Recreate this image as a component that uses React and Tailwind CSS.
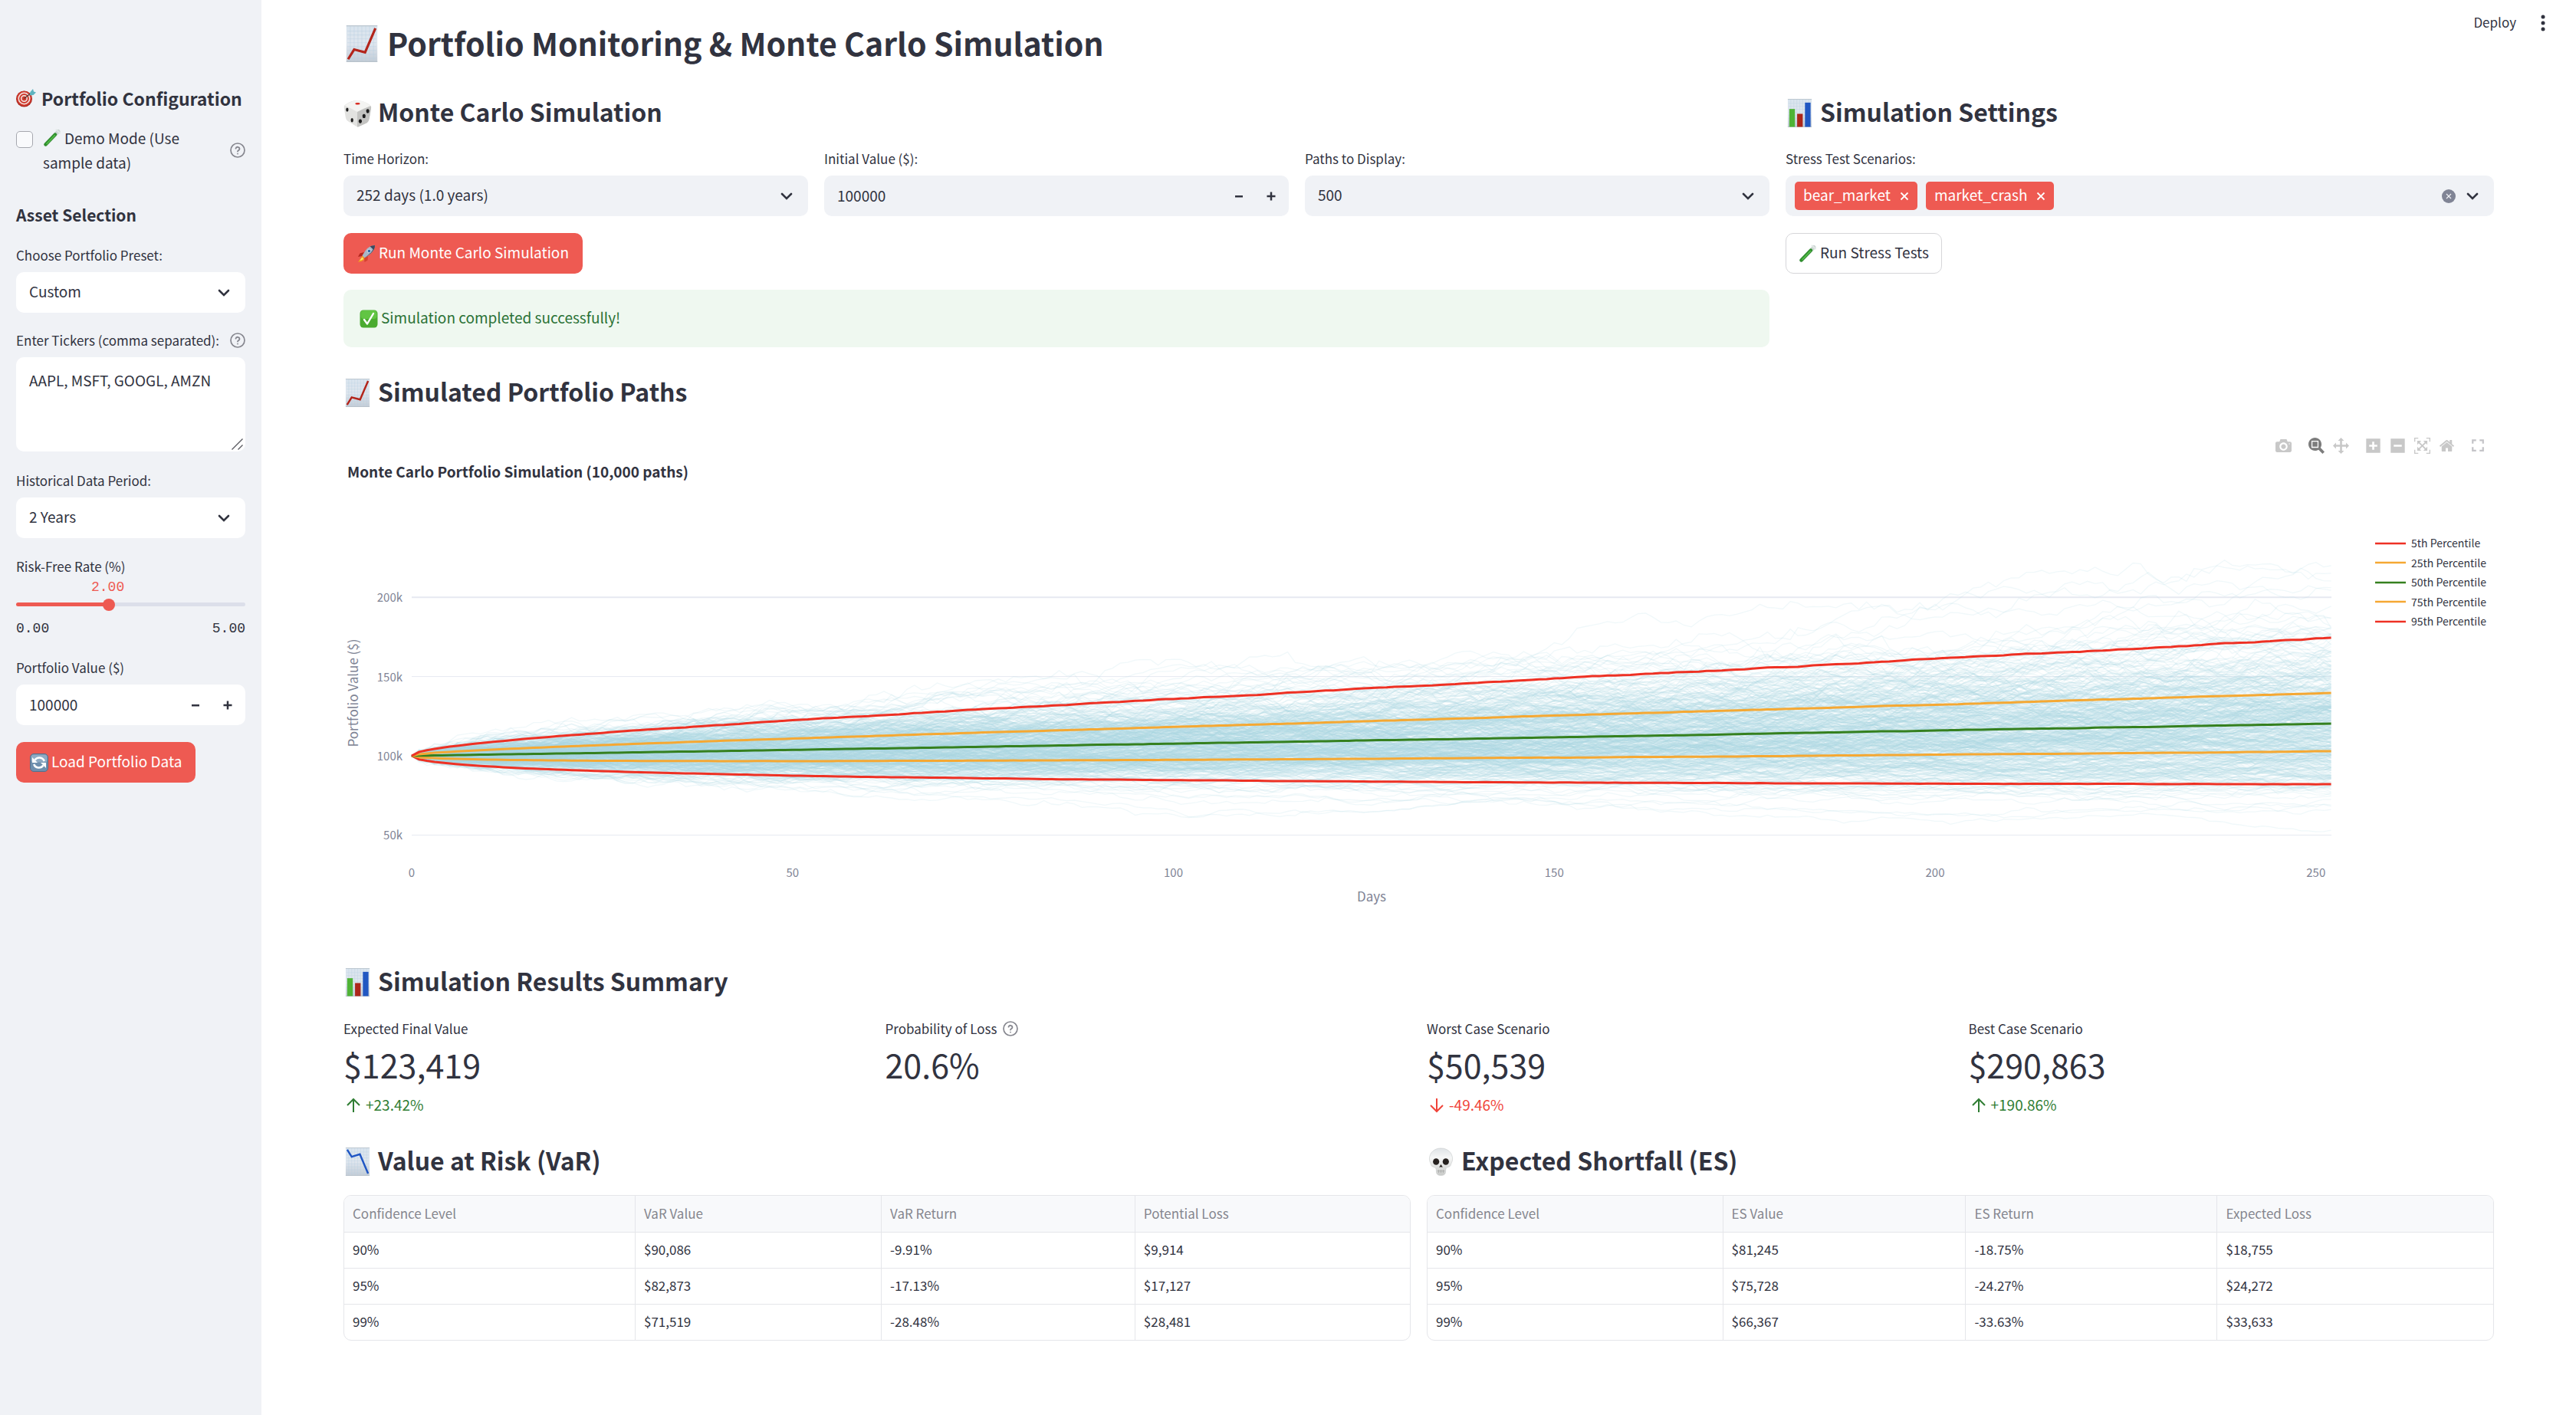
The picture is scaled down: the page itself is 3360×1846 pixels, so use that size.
import React, { useMemo, useState } from "react";

/* ---------- emoji-style pictograms ---------- */

const PaperDefs = ({ id }) => (
  <defs>
    <linearGradient id={id} x1="0" y1="0" x2="0" y2="1">
      <stop offset="0" stopColor="#d9e4ee" />
      <stop offset="0.5" stopColor="#dfe6ee" />
      <stop offset="1" stopColor="#c3ccd6" />
    </linearGradient>
  </defs>
);

const Paper = ({ id }) => (
  <>
    <PaperDefs id={id} />
    <rect x="3" y="0" width="32" height="38" fill={`url(#${id})`} />
    <path
      d="M7 1v36M11 1v36M15 1v36M19 1v36M23 1v36M27 1v36M31 1v36M4 6h30M4 10h30M4 14h30M4 18h30M4 22h30M4 26h30M4 30h30M4 34h30"
      stroke="#b9cfe2"
      strokeWidth="0.500"
      opacity="0.700"
    />
    <path d="M3 0.500h32M3 37.500h32" stroke="#b4bec8" strokeWidth="0.800" />
  </>
);

const ChartUp = ({ className }) => (
  <svg viewBox="0 0 38 38" className={className} role="img" aria-label="Chart increasing" fill="none">
    <Paper id="paper-up" />
    <path d="M4.800 35L11 25l11.300 3L33 3" stroke="#b3241a" strokeWidth="2.500" />
  </svg>
);

const ChartDown = ({ className }) => (
  <svg viewBox="0 0 38 38" className={className} role="img" aria-label="Chart decreasing" fill="none">
    <Paper id="paper-down" />
    <path d="M5 3L11 12.500l11-3.500L33 35" stroke="#1f56c4" strokeWidth="2.500" />
  </svg>
);

const BarChart = ({ className }) => (
  <svg viewBox="0 0 38 38" className={className} role="img" aria-label="Bar chart">
    <Paper id="paper-bars" />
    <rect x="5" y="13.500" width="7.500" height="24" fill="#4fb336" />
    <rect x="15.500" y="20" width="7.500" height="17.500" fill="#ad261a" />
    <rect x="26" y="5" width="7.500" height="32.500" fill="#2157c2" />
  </svg>
);

const Dice = ({ className }) => (
  <svg viewBox="0 0 38 38" className={className} role="img" aria-label="Game die">
    <path d="M20 2Q30 3.500 35 8Q37.500 10 37 13L34.500 27Q34 30 31.500 32L21 37Q18.500 38 16.500 36.500L5.500 29.500Q3.500 28 3 25.500L0.800 12Q0.500 8.500 3 7.500Q11 1.500 20 2Z" fill="#e2e2e0" />
    <path d="M1.800 9Q11 1.500 20 2Q31 3.500 36 9.500Q28 12.500 18.500 17.500Q10 12.500 1.800 9Z" fill="#f4f4f2" />
    <path d="M18.500 17.500Q28 12.500 36.500 9.500Q37.500 11 37 13L34.500 27Q34 30 31.500 32L21 37Q19.500 37.800 18.500 37.500Z" fill="#c3c3c1" />
    <ellipse cx="19" cy="6.500" rx="3.200" ry="1.300" fill="#d8261c" />
    <ellipse cx="5" cy="14.500" rx="1.700" ry="2.800" fill="#1d1d1d" />
    <ellipse cx="11.500" cy="28.500" rx="1.700" ry="2.800" fill="#1d1d1d" />
    <ellipse cx="32.500" cy="16.500" rx="2.100" ry="2.800" fill="#1d1d1d" />
    <ellipse cx="27.500" cy="23" rx="2.100" ry="2.800" fill="#1d1d1d" />
    <ellipse cx="22.500" cy="30" rx="2.100" ry="2.800" fill="#1d1d1d" />
  </svg>
);

const Target = ({ className }) => (
  <svg viewBox="0 0 26 24" className={className} role="img" aria-label="Direct hit" fill="none">
    <circle cx="10.500" cy="13" r="10.500" fill="#a5271f" />
    <circle cx="10.500" cy="12.500" r="9.800" fill="#cf3a2e" />
    <circle cx="10.500" cy="12.500" r="7.200" stroke="#f4e9e6" strokeWidth="1.500" />
    <circle cx="10.500" cy="12.500" r="3.700" stroke="#f4e9e6" strokeWidth="1.500" />
    <path d="M10.500 12.500L20 5" stroke="#4a3a34" strokeWidth="1.200" />
    <path d="M17.500 8.500l1-4.500 3.500-4 1 3.500 3 1-3.500 3.500z" fill="#5fb4c0" />
  </svg>
);

const TestTube = ({ className }) => (
  <svg viewBox="0 0 24 24" className={className} role="img" aria-label="Test tube" fill="none" strokeLinecap="round">
    <path d="M3.500 20.500L20 3.500" stroke="#ccd6d3" strokeWidth="5" />
    <path d="M3.500 20.500L16 7.500" stroke="#2f8f2c" strokeWidth="4.400" />
    <path d="M5 19.500L15.500 8.500" stroke="#57bd4c" strokeWidth="1.600" />
    <path d="M17.500 1.500l4.500 4" stroke="#e2e8e6" strokeWidth="2" />
  </svg>
);

const Rocket = ({ className }) => (
  <svg viewBox="0 0 24 24" className={className} role="img" aria-label="Rocket">
    <path d="M7 14L1 23q5-.5 8-3l2-3z" fill="#f39a1f" />
    <path d="M6.500 16.500L3 21q3-.5 5-2z" fill="#ffe36b" />
    <path d="M9 10L3.500 11.500 1 16l5.500-1z" fill="#b3261d" />
    <path d="M14 15l-.5 5.500L9.500 23l-.5-6z" fill="#d5402f" />
    <path d="M23 1Q16 1 11 7.500L6.500 14.500 9.500 17.500 16 13Q22.500 8 23 1Z" fill="#a9b6c6" />
    <path d="M23 1Q21 9 9.500 17.500L16 13Q22.500 8 23 1Z" fill="#4c5a70" />
    <path d="M23 1Q19 1 16.500 2.500L21.500 7Q23 4 23 1Z" fill="#39495f" />
    <circle cx="15.500" cy="8.500" r="2.300" fill="#2f6aa8" stroke="#e5ebf2" strokeWidth="0.800" />
  </svg>
);

const CheckBoxMark = ({ className }) => (
  <svg viewBox="0 0 24 24" className={className} role="img" aria-label="Check mark button" fill="none">
    <rect x="0.500" y="0.500" width="23" height="23" rx="4.500" fill="#4bab30" />
    <rect x="1.500" y="1" width="21" height="11" rx="4" fill="#62c544" />
    <path d="M6 13l4 5.500L18 5" stroke="#fff" strokeWidth="2.400" strokeLinecap="round" strokeLinejoin="round" />
  </svg>
);

const Refresh = ({ className }) => (
  <svg viewBox="0 0 24 24" className={className} role="img" aria-label="Counterclockwise arrows" fill="none">
    <rect x="0.500" y="0.500" width="23" height="23" rx="4.500" fill="#6f8fae" stroke="#54708c" />
    <rect x="1.500" y="1.500" width="21" height="10" rx="3.500" fill="#8fabc4" />
    <path d="M6.500 8.500a7 7 0 0 1 12.300 1.500" stroke="#fff" strokeWidth="2.600" />
    <path d="M17.500 15.500a7 7 0 0 1-12.300-1.500" stroke="#fff" strokeWidth="2.600" />
    <path d="M3 5v7h7z" fill="#fff" />
    <path d="M21 19v-7h-7z" fill="#fff" />
  </svg>
);

const Skull = ({ className }) => (
  <svg viewBox="0 0 38 38" className={className} role="img" aria-label="Skull">
    <defs>
      <linearGradient id="bone" x1="0" y1="0" x2="0" y2="1">
        <stop offset="0" stopColor="#dfe3e6" />
        <stop offset="0.350" stopColor="#f6f7f7" />
        <stop offset="1" stopColor="#c9cac8" />
      </linearGradient>
    </defs>
    <path d="M19 1C10 1 3.500 7 3.500 15.500C3.500 19.500 5.500 21 6 24C7 27 12 25.500 12.500 29L13 34Q13.500 37.500 19 37.500Q24.500 37.500 25 34L25.500 29C26 25.500 31 27 32 24C32.500 21 34.500 19.500 34.500 15.500C34.500 7 28 1 19 1Z" fill="url(#bone)" stroke="#c6c9ca" strokeWidth="0.600" />
    <ellipse cx="12.500" cy="19" rx="4.200" ry="4.400" fill="#26211f" />
    <ellipse cx="25.500" cy="19" rx="4.200" ry="4.400" fill="#26211f" />
    <path d="M19 22.500l-2.300 4h1.600L19 25.700l.7.8h1.600z" fill="#26211f" />
    <path d="M14 31.500h10M16 30v4M19 30v4M22 30v4" stroke="#a3a5a3" strokeWidth="0.800" />
  </svg>
);

/* ---------- small UI icons ---------- */

const Chevron = ({ className = "" }) => (
  <svg viewBox="0 0 16 10" className={`h-[10px] w-4 text-[#31333f] ${className}`} fill="none" stroke="currentColor" strokeWidth="2.600" strokeLinecap="round" aria-hidden="true">
    <path d="M2 2l6 6 6-6" />
  </svg>
);

const Help = () => (
  <svg viewBox="0 0 24 24" className="size-5 shrink-0 text-[#85868e]" fill="none" stroke="currentColor" strokeWidth="2" strokeLinecap="round" role="img" aria-label="Help">
    <circle cx="12" cy="12" r="10.800" />
    <path d="M9 9.200a3 3 0 0 1 5.900.9c0 2-2.900 2.500-2.900 3.800M12 17.500h.01" strokeWidth="2.200" />
  </svg>
);

const Minus = () => (
  <svg viewBox="0 0 12 12" className="size-3" aria-hidden="true"><path d="M1 5h10v2.500H1z" fill="currentColor" /></svg>
);
const Plus = () => (
  <svg viewBox="0 0 12 12" className="size-3" aria-hidden="true"><path d="M0.500 4.800h11v2.500h-11zM4.750 0.500h2.500v11h-2.500z" fill="currentColor" /></svg>
);
const Cross = ({ className }) => (
  <svg viewBox="0 0 12 12" className={className} fill="none" stroke="currentColor" strokeWidth="1.800" aria-hidden="true">
    <path d="M1.500 1.500l9 9M10.500 1.500l-9 9" />
  </svg>
);

const Arrow = ({ down }) => (
  <svg viewBox="0 0 20 20" className={down ? "size-5 rotate-180" : "size-5"} fill="none" stroke="currentColor" strokeWidth="2" aria-hidden="true">
    <path d="M10 19V2M2 10l8-8 8 8" />
  </svg>
);

/* ---------- form pieces ---------- */

const Label = ({ htmlFor, children }) => (
  <label htmlFor={htmlFor} className="block text-[17px] leading-7">{children}</label>
);

function Select({ id, label, value, side }) {
  return (
    <div>
      <Label htmlFor={id}>{label}</Label>
      <div className="relative mt-2">
        <select
          id={id}
          defaultValue={value}
          className={`block h-[53px] w-full appearance-none rounded-[10px] pr-12 pb-[2px] pl-[17px] text-[19px] outline-none ${side ? "bg-white" : "bg-[#f0f2f6]"}`}
        >
          <option>{value}</option>
        </select>
        <Chevron className="pointer-events-none absolute top-[22px] right-5" />
      </div>
    </div>
  );
}

function NumberField({ id, label, side }) {
  const [value, setValue] = useState(100000);
  return (
    <div>
      <Label htmlFor={id}>{label}</Label>
      <div className={`mt-2 flex h-[53px] items-center overflow-hidden rounded-[10px] pr-[2px] ${side ? "bg-white" : "bg-[#f0f2f6]"}`}>
        <input
          id={id}
          inputMode="numeric"
          value={value}
          onChange={(e) => setValue(Number(e.target.value) || 0)}
          className="h-full min-w-0 flex-1 bg-transparent pb-[2px] pl-[17px] text-[19px] outline-none"
        />
        <button aria-label="Decrease" onClick={() => setValue(value - 1000)} className="grid h-full w-[42px] place-items-center"><Minus /></button>
        <button aria-label="Increase" onClick={() => setValue(value + 1000)} className="grid h-full w-[42px] place-items-center"><Plus /></button>
      </div>
    </div>
  );
}

const primaryButton =
  "flex h-[53px] w-fit items-center gap-1 rounded-[10px] bg-[#ee5a52] px-[18px] text-[19px] text-white";

const SectionTitle = ({ icon: Icon, children }) => (
  <h3 className="flex items-center gap-2 text-[32px] leading-10 font-bold">
    <Icon className="size-[37px] shrink-0" />
    <span className="pb-1">{children}</span>
  </h3>
);

/* ---------- sidebar ---------- */

function Sidebar() {
  return (
    <aside className="w-[341px] shrink-0 bg-[#f0f2f6] px-[21px] pt-28">
      <h2 className="flex items-center gap-[7px] text-[23px] leading-8 font-bold whitespace-nowrap">
        <Target className="h-6 w-[26px] shrink-0" />
        Portfolio Configuration
      </h2>
      <div className="mt-5 flex items-center justify-between">
        <label className="flex items-start gap-[13px] text-[19px] leading-8">
          <input type="checkbox" className="mt-[7px] size-[22px] shrink-0 appearance-none rounded-[5px] border border-[#a6a8af] bg-[#f9fafc]" />
          <span className="w-[190px]">
            <TestTube className="mr-1 inline-block size-6 align-[-4px]" />
            Demo Mode (Use sample data)
          </span>
        </label>
        <Help />
      </div>
      <h3 className="mt-9 text-[21px] leading-8 font-bold">Asset Selection</h3>
      <div className="mt-[23px]">
        <Select id="preset" label="Choose Portfolio Preset:" value="Custom" side />
      </div>
      <div className="mt-[22px]">
        <div className="flex items-center justify-between">
          <Label htmlFor="tickers">Enter Tickers (comma separated):</Label>
          <Help />
        </div>
        <div className="relative mt-2">
          <textarea
            id="tickers"
            defaultValue="AAPL, MSFT, GOOGL, AMZN"
            className="block h-[123px] w-full resize-y rounded-[10px] bg-white px-[17px] py-[14px] text-[19px] leading-8 outline-none [&::-webkit-resizer]:hidden"
          />
          <svg viewBox="0 0 15 15" className="pointer-events-none absolute right-[3px] bottom-[2px] size-[15px]" fill="none" stroke="#55565c" strokeWidth="1.300" aria-hidden="true">
            <path d="M0.500 14.500l14-14M8.500 14.500l6-6" />
          </svg>
        </div>
      </div>
      <div className="mt-6">
        <Select id="period" label="Historical Data Period:" value="2 Years" side />
      </div>
      <div className="mt-[23px]">
        <Label htmlFor="rate">Risk-Free Rate (%)</Label>
        <div className="ml-[40%] w-fit -translate-x-1/2 font-[Liberation_Mono,monospace] text-[18px] leading-[26px] text-[#ee5a52]">2.00</div>
        <input
          id="rate"
          type="range"
          min="0"
          max="5"
          step="0.1"
          defaultValue="2"
          className="mt-[7px] block h-[5px] w-full appearance-none rounded-full bg-[linear-gradient(to_right,#ee5a52_40%,#dcdfea_40%)] [&::-webkit-slider-thumb]:size-4 [&::-webkit-slider-thumb]:appearance-none [&::-webkit-slider-thumb]:rounded-full [&::-webkit-slider-thumb]:bg-[#ee5a52]"
        />
        <div className="mt-4 flex justify-between font-[Liberation_Mono,monospace] text-[18px] leading-[26px]">
          <span>0.00</span>
          <span>5.00</span>
        </div>
      </div>
      <div className="mt-6">
        <NumberField id="portfolio-value" label="Portfolio Value ($)" side />
      </div>
      <button className={`mt-[22px] ${primaryButton}`}>
        <Refresh className="size-6" />
        <span className="pb-[2px]">Load Portfolio Data</span>
      </button>
    </aside>
  );
}

/* ---------- chart ---------- */

const X0 = 89;
const DAY = 9.935;
const DAYS = 252;
const yOf = (v) => 305 - (v - 100) * 2.068;

function mulberry(seed) {
  let a = seed;
  return () => {
    a = (a + 0x6d2b79f5) | 0;
    let t = Math.imul(a ^ (a >>> 15), 1 | a);
    t = (t + Math.imul(t ^ (t >>> 7), 61 | t)) ^ t;
    return ((t ^ (t >>> 14)) >>> 0) / 4294967296;
  };
}

function simulatePaths(count) {
  const rnd = mulberry(11);
  const gauss = () => Math.sqrt(-2 * Math.log(1 - rnd())) * Math.cos(2 * Math.PI * rnd());
  const sd = 0.222 / Math.sqrt(DAYS);
  const drift = 0.1856 / DAYS;
  const out = [];
  while (out.length < count) {
    let log = 0;
    let max = 100;
    let min = 100;
    let d = `M${X0} ${yOf(100)}`;
    for (let t = 1; t <= DAYS; t++) {
      log += drift + sd * gauss();
      const v = 100 * Math.exp(log);
      max = Math.max(max, v);
      min = Math.min(min, v);
      d += `L${(X0 + t * DAY).toFixed(1)} ${yOf(v).toFixed(1)}`;
    }
    if (max < 233 && min > 47) out.push(d);
  }
  return out;
}

function percentileLine(spread, seed) {
  const rnd = mulberry(seed);
  const noise = spread > 0.3 ? 0.5 : 0.15;
  let wobble = 0;
  let d = `M${X0} ${yOf(100)}`;
  for (let t = 1; t <= DAYS; t++) {
    const f = t / DAYS;
    wobble = wobble * 0.85 + (rnd() - 0.5) * noise * Math.sqrt(f);
    const v = 100 * Math.exp(0.1856 * f + spread * Math.sqrt(f)) + wobble;
    d += `L${(X0 + t * DAY).toFixed(1)} ${yOf(v).toFixed(1)}`;
  }
  return d;
}

const PERCENTILES = [
  { name: "5th Percentile", color: "#ee3124", spread: -0.382 },
  { name: "25th Percentile", color: "#f5a833", spread: -0.158 },
  { name: "50th Percentile", color: "#35801f", spread: 0 },
  { name: "75th Percentile", color: "#f5a833", spread: 0.1487 },
  { name: "95th Percentile", color: "#ee3124", spread: 0.37 },
];

function Plot() {
  const paths = useMemo(() => simulatePaths(500), []);
  return (
    <svg viewBox="0 0 2650 520" className="block h-auto min-w-0 flex-1" role="img" aria-label="Simulated portfolio value by day" fontSize="15" fill="#808495">
      {[200, 150, 100, 50].map((v) => (
        <g key={v}>
          <path d={`M${X0} ${yOf(v)}H2593`} stroke="#e6e9f1" strokeWidth={v === 200 ? 2 : 1} />
          <text x="77" y={yOf(v) + 6} textAnchor="end">{v}k</text>
        </g>
      ))}
      {[0, 50, 100, 150, 200, 250].map((d) => (
        <text key={d} x={X0 + d * DAY} y="463" textAnchor="middle">{d}</text>
      ))}
      <g fill="none" stroke="#add8e6" strokeWidth="1.300" strokeOpacity="0.180">
        {paths.map((d, i) => <path key={i} d={d} />)}
      </g>
      <g fill="none" strokeWidth="3" strokeLinejoin="round">
        {PERCENTILES.map((p, i) => <path key={p.name} d={percentileLine(p.spread, 40 + i)} stroke={p.color} />)}
      </g>
      <text x="1341" y="495" textAnchor="middle" fontSize="17">Days</text>
      <text transform="rotate(-90 19 223)" x="19" y="223" textAnchor="middle" fontSize="17">Portfolio Value ($)</text>
    </svg>
  );
}

const BAR_ICONS = {
  camera: "m500 450c-83 0-150-67-150-150 0-83 67-150 150-150 83 0 150 67 150 150 0 83-67 150-150 150z m400 150h-120c-16 0-34 13-39 29l-31 93c-6 15-23 28-40 28h-340c-16 0-34-13-39-28l-31-94c-6-15-23-28-40-28h-120c-55 0-100-45-100-100v-450c0-55 45-100 100-100h800c55 0 100 45 100 100v450c0 55-45 100-100 100z m-400-550c-138 0-250 112-250 250 0 138 112 250 250 250 138 0 250-112 250-250 0-138-112-250-250-250z m365 380c-19 0-35 16-35 35 0 19 16 35 35 35 19 0 35-16 35-35 0-19-16-35-35-35z",
  zoom: "m1000-25l-250 251c40 63 63 138 63 218 0 224-182 406-407 406-224 0-406-182-406-406s183-406 407-406c80 0 155 22 218 62l250-250 125 125z m-812 250l0 438 437 0 0-438-437 0z m62 375l313 0 0-312-313 0 0 312z",
  pan: "m1000 350l-187 188 0-125-250 0 0 250 125 0-188 187-187-187 125 0 0-250-250 0 0 125-188-188 186-187 0 125 252 0 0-250-125 0 187-188 188 188-125 0 0 250 250 0 0-126 187 188z",
  plus: "m1 787l0-875 875 0 0 875-875 0z m687-500l-187 0 0-187-125 0 0 187-188 0 0 125 188 0 0 187 125 0 0-187 187 0 0-125z",
  minus: "m0 788l0-876 875 0 0 876-875 0z m688-500l-500 0 0 125 500 0 0-125z",
  autoscale: "m250 850l-187 0-63 0 0-62 0-188 63 0 0 188 187 0 0 62z m688 0l-188 0 0-62 188 0 0-188 62 0 0 188 0 62-62 0z m-875-938l0 188-63 0 0-188 0-62 63 0 187 0 0 62-187 0z m875 188l0-188-188 0 0-62 188 0 62 0 0 62 0 188-62 0z m-125 188l-1 0-93-94-156 156 156 156 92-93 2 0 0 250-250 0 0-2 93-92-156-156-156 156 94 92 0 2-250 0 0-250 0 0 93 93 157-156-157-156-93 94 0 0 0-250 250 0 0 0-94 93 156 157 156-157-93-93 0 0 250 0 0 250z",
  home: "m786 296v-267q0-15-11-26t-25-10h-214v214h-143v-214h-214q-15 0-25 10t-11 26v267q0 1 0 2t0 2l321 264 321-264q1-1 1-4z m124 39l-34-41q-5-5-12-6h-2q-7 0-12 3l-386 322-386-322q-7-4-13-4-7 2-12 7l-35 41q-4 5-3 13t6 12l401 334q18 15 42 15t43-15l136-114v109q0 8 5 13t13 5h107q8 0 13-5t5-13v-227l122-102q5-5 6-12t-4-13z",
};

const BarButton = ({ name, label, active }) => (
  <button aria-label={label} className={`grid w-8 place-items-center ${active ? "text-[#7d7d7d]" : "text-[#c8c8c8]"}`}>
    <svg viewBox={name === "plus" || name === "minus" ? "-62 0 1000 1000" : name === "home" ? "-36 0 1000 1000" : "0 0 1000 1000"} className="size-[21px]" fill="currentColor">
      <path transform="matrix(1 0 0 -1 0 850)" d={BAR_ICONS[name]} />
    </svg>
  </button>
);

const ModeBar = () => (
  <div className="mt-9 flex h-[22px] items-center justify-end pr-[5px]">
    <BarButton name="camera" label="Download plot as a png" />
    <div className="ml-[11px] flex">
      <BarButton name="zoom" label="Zoom" active />
      <BarButton name="pan" label="Pan" />
    </div>
    <div className="ml-[10px] flex">
      <BarButton name="plus" label="Zoom in" />
      <BarButton name="minus" label="Zoom out" />
      <BarButton name="autoscale" label="Autoscale" />
      <BarButton name="home" label="Reset axes" />
    </div>
    <button aria-label="Fullscreen" className="ml-[9px] grid w-8 place-items-center text-[#c4c4c8]">
      <svg viewBox="4 4 16 16" className="size-[18px]" fill="currentColor">
        <path d="M7 14H5v5h5v-2H7v-3zm-2-4h2V7h3V5H5v5zm12 7h-3v2h5v-5h-2v3zM14 5v2h3v3h2V5h-5z" />
      </svg>
    </button>
  </div>
);

/* ---------- results ---------- */

const METRICS = [
  { label: "Expected Final Value", value: "$123,419", delta: "+23.42%" },
  { label: "Probability of Loss", value: "20.6%", help: true },
  { label: "Worst Case Scenario", value: "$50,539", delta: "-49.46%", down: true },
  { label: "Best Case Scenario", value: "$290,863", delta: "+190.86%" },
];

const Metric = ({ label, value, delta, down, help }) => (
  <div>
    <div className="flex items-center gap-2 text-[17px] leading-7">
      {label}
      {help && <Help />}
    </div>
    <div className="text-[43px] leading-[64px]">{value}</div>
    {delta && (
      <div className={`mt-[7px] flex items-center gap-[6px] pl-[3px] text-[19px] leading-7 ${down ? "text-[#f0443a]" : "text-[#2f7d33]"}`}>
        <Arrow down={down} />
        <span className="pb-[2px]">{delta}</span>
      </div>
    )}
  </div>
);

const DataTable = ({ cols, head, rows }) => (
  <div className="mt-[22px] overflow-hidden rounded-[10px] border border-[#e5e6ea]">
    <table className="w-full table-fixed border-collapse text-left text-[17px]">
      <colgroup>{cols.map((c, i) => <col key={i} className={c} />)}</colgroup>
      <thead>
        <tr className="h-[47px] border-b border-[#e5e6ea] bg-[#f8f9fb] text-[#85868e]">
          {head.map((h) => <th key={h} className="border-l border-[#e5e6ea] px-[11px] pb-[2px] font-normal first:border-l-0">{h}</th>)}
        </tr>
      </thead>
      <tbody>
        {rows.map((r) => (
          <tr key={r[0]} className="h-[47px] border-b border-[#e5e6ea] last:border-b-0">
            {r.map((c) => <td key={c} className="border-l border-[#e5e6ea] px-[11px] pb-[2px] first:border-l-0">{c}</td>)}
          </tr>
        ))}
      </tbody>
    </table>
  </div>
);

const Tag = ({ children }) => (
  <span className="flex h-[37px] items-center gap-3 rounded-[5px] bg-[#ee5a52] px-[11px] text-[19px] text-white">
    <span className="pb-[2px]">{children}</span>
    <button aria-label={`Remove ${children}`}><Cross className="size-3" /></button>
  </span>
);

export default function App() {
  return (
    <div className="flex min-h-screen items-stretch bg-white font-['Noto_Sans_CJK_SC',sans-serif] text-[#31333f]">
      <Sidebar />
      <div className="relative min-w-0 flex-1">
        <header className="absolute top-0 right-0 flex h-[60px] items-center gap-6 pr-8">
          <button className="pb-[2px] text-[17px]">Deploy</button>
          <button aria-label="Menu">
            <svg viewBox="0 0 22 22" className="size-[22px]" fill="currentColor">
              <circle cx="11" cy="3" r="2.500" />
              <circle cx="11" cy="11" r="2.500" />
              <circle cx="11" cy="19" r="2.500" />
            </svg>
          </button>
        </header>

        <main className="px-[107px] pt-7 pb-20">
          <h1 className="flex items-center gap-[9px] text-[41px] leading-[54px] font-bold">
            <ChartUp className="size-12 shrink-0" />
            <span className="pb-1">Portfolio Monitoring &amp; Monte Carlo Simulation</span>
          </h1>

          <div className="mt-[39px] grid grid-cols-[1860fr_924fr] gap-[21px]">
            <section>
              <SectionTitle icon={Dice}>Monte Carlo Simulation</SectionTitle>
              <div className="mt-6 grid grid-cols-3 gap-[21px]">
                <Select id="horizon" label="Time Horizon:" value="252 days (1.0 years)" />
                <NumberField id="initial" label="Initial Value ($):" />
                <Select id="paths" label="Paths to Display:" value="500" />
              </div>
              <button className={`mt-[22px] ${primaryButton}`}>
                <Rocket className="size-6" />
                <span className="pb-[2px]">Run Monte Carlo Simulation</span>
              </button>
              <div role="status" className="mt-[21px] flex h-[75px] items-center gap-1 rounded-[10px] bg-[#eff8f0] px-[21px] text-[19px] text-[#2b7236]">
                <CheckBoxMark className="size-6" />
                <span className="pb-[2px]">Simulation completed successfully!</span>
              </div>
            </section>
            <section>
              <SectionTitle icon={BarChart}>Simulation Settings</SectionTitle>
              <div className="mt-6">
                <Label htmlFor="scenarios">Stress Test Scenarios:</Label>
                <div className="mt-2 flex h-[53px] items-center gap-[11px] rounded-[10px] bg-[#f0f2f6] pr-5 pl-3">
                  <Tag>bear_market</Tag>
                  <Tag>market_crash</Tag>
                  <input id="scenarios" className="h-full min-w-0 flex-1 bg-transparent text-[19px] outline-none" />
                  <button aria-label="Clear all" className="grid size-[18px] place-items-center rounded-full bg-[#808495] text-[#f0f2f6]">
                    <Cross className="size-2" />
                  </button>
                  <button aria-label="Open" className="ml-[3px]"><Chevron /></button>
                </div>
              </div>
              <button className="mt-[22px] flex h-[53px] w-fit items-center gap-1 rounded-[10px] border border-[#d6d6d9] bg-white px-4 text-[19px]">
                <TestTube className="size-6" />
                <span className="pb-[2px]">Run Stress Tests</span>
              </button>
            </section>
          </div>

          <section className="mt-[37px]">
            <SectionTitle icon={ChartUp}>Simulated Portfolio Paths</SectionTitle>
            <ModeBar />
            <h4 className="mt-[9px] pl-[5px] text-[19px] leading-7 font-bold">Monte Carlo Portfolio Simulation (10,000 paths)</h4>
            <div className="mt-[52px] flex items-start">
              <Plot />
              <ul className="mt-[15px] flex h-[127px] w-[155px] shrink-0 flex-col justify-between text-[14px] leading-[25px] whitespace-nowrap">
                {PERCENTILES.map((p) => (
                  <li key={p.name} className="flex items-center gap-[7px]">
                    <svg viewBox="0 0 40 4" className="h-1 w-10" aria-hidden="true"><path d="M0 2h40" stroke={p.color} strokeWidth="2.700" /></svg>
                    {p.name}
                  </li>
                ))}
              </ul>
            </div>
          </section>

          <section className="mt-[58px]">
            <SectionTitle icon={BarChart}>Simulation Results Summary</SectionTitle>
            <div className="mt-[25px] grid grid-cols-4 gap-[21px]">
              {METRICS.map((m) => <Metric key={m.label} {...m} />)}
            </div>
          </section>

          <div className="mt-9 grid grid-cols-2 gap-[21px]">
            <section>
              <SectionTitle icon={ChartDown}>Value at Risk (VaR)</SectionTitle>
              <DataTable
                cols={["w-[27.3%]", "w-[23.1%]", "w-[23.8%]", "w-[25.8%]"]}
                head={["Confidence Level", "VaR Value", "VaR Return", "Potential Loss"]}
                rows={[
                  ["90%", "$90,086", "-9.91%", "$9,914"],
                  ["95%", "$82,873", "-17.13%", "$17,127"],
                  ["99%", "$71,519", "-28.48%", "$28,481"],
                ]}
              />
            </section>
            <section>
              <SectionTitle icon={Skull}>Expected Shortfall (ES)</SectionTitle>
              <DataTable
                cols={["w-[27.7%]", "w-[22.8%]", "w-[23.6%]", "w-[25.9%]"]}
                head={["Confidence Level", "ES Value", "ES Return", "Expected Loss"]}
                rows={[
                  ["90%", "$81,245", "-18.75%", "$18,755"],
                  ["95%", "$75,728", "-24.27%", "$24,272"],
                  ["99%", "$66,367", "-33.63%", "$33,633"],
                ]}
              />
            </section>
          </div>
        </main>
      </div>
    </div>
  );
}
